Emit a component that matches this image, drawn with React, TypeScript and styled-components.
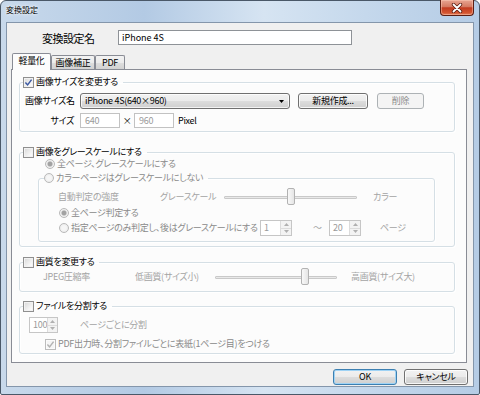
import React from 'react';
import styled, { createGlobalStyle } from 'styled-components';

const GlobalStyle = createGlobalStyle`
  html, body { margin: 0; padding: 0; background: #fff; }
  body {
    font-family: "Noto Sans CJK JP", "Noto Sans", sans-serif;
    font-size: 9px;
    letter-spacing: -0.3px;
    font-feature-settings: "palt";
    line-height: 12px;
    color: #000;
  }
  * { box-sizing: border-box; }
`;

type Tone = 'on' | 'off' | 'faint';
const toneColor: Record<Tone, string> = { on: '#000', off: '#8a8a8a', faint: '#a4a4a4' };

const Window = styled.div`
  width: 480px;
  height: 395px;
  display: flex;
  flex-direction: column;
  padding: 0 5px 7px;
  border: 1px solid #4a5868;
  border-radius: 6px 6px 2px 2px;
  background: linear-gradient(to right, #c8d9eb 0%, #b3cae4 30%, #d6e4f2 55%, #c2d6eb 80%, #b5cce5 100%);
`;

const TitleBar = styled.div`
  height: 21px;
  flex: none;
  display: flex;
  justify-content: space-between;
  align-items: flex-start;
`;

const TitleText = styled.span`
  margin-top: 4px;
  font-size: 8px;
  letter-spacing: 0;
  line-height: 10px;
  text-shadow: 0 0 4px #fff, 0 0 2px #fff;
`;

const CloseButton = styled.div`
  width: 34px;
  height: 16px;
  margin-top: -1px;
  border: 1px solid #5b1e13;
  border-top: none;
  border-radius: 0 0 4px 4px;
  background: linear-gradient(#e8a592 0%, #d57a62 45%, #c23b20 52%, #d35530 85%, #e3805d 100%);
  box-shadow: inset 0 0 0 1px rgba(255, 210, 190, 0.45);
  display: flex;
  align-items: center;
  justify-content: center;
`;

const Client = styled.div`
  flex: 1;
  display: flex;
  flex-direction: column;
  background: #f0f0f0;
  border: 1px solid #8496ab;
`;

const NameRow = styled.div`
  flex: none;
  display: flex;
  align-items: center;
  height: 15px;
  margin-top: 7px;
  padding-left: 35px;
`;

const NameLabel = styled.span`
  width: 76px;
  font-size: 11px;
  letter-spacing: -0.5px;
`;

const NameInput = styled.input`
  width: 234px;
  height: 15px;
  padding: 0 3px;
  border: 1px solid #8e9297;
  background: #fff;
  font: inherit;
  letter-spacing: 0;
  color: #000;
  outline: none;
`;

const TabStrip = styled.div`
  flex: none;
  display: flex;
  align-items: flex-end;
  height: 16px;
  margin: 8px 0 0 5px;
`;

const Tab = styled.div<{ $active?: boolean; $w: number }>`
  position: relative;
  z-index: ${p => (p.$active ? 1 : 0)};
  width: ${p => p.$w}px;
  height: ${p => (p.$active ? 17 : 14)}px;
  margin-bottom: ${p => (p.$active ? -1 : 0)}px;
  border: 1px solid #898c95;
  border-bottom: none;
  border-radius: 2px 2px 0 0;
  background: ${p => (p.$active ? '#fcfcfc' : 'linear-gradient(#f3f3f3, #ebebeb 50%, #dedede 50%, #d2d2d2)')};
  display: flex;
  align-items: center;
  justify-content: center;
  padding-bottom: ${p => (p.$active ? 2 : 0)}px;
`;

const Panel = styled.div`
  flex: 1;
  margin: 0 6px 0 4px;
  border: 1px solid #898c95;
  background: #fcfcfc;
  display: flex;
  flex-direction: column;
`;

const Group = styled.fieldset<{ $top: number; $inner?: boolean }>`
  margin: ${p => (p.$inner ? `${p.$top}px 14px 0 13px` : `${p.$top}px 11px 0 7px`)};
  padding: 0 5px;
  padding-left: ${p => (p.$inner ? 7 : 5)}px;
  min-width: 0;
  border: 1px solid #d5dfe5;
  border-radius: 3px;
  box-shadow: inset 1px 1px 0 #fff, 1px 1px 0 #fff;
`;

const Legend = styled.legend`
  padding: 0 5px 0 0;
  margin-left: -2px;
  height: 12px;
`;

const GroupBody = styled.div<{ $pt: number; $pb: number }>`
  display: flex;
  flex-direction: column;
  padding: ${p => p.$pt}px 0 ${p => p.$pb}px;
`;

const Row = styled.div<{ $h: number; $mt?: number; $pl?: number }>`
  display: flex;
  align-items: center;
  height: ${p => p.$h}px;
  margin-top: ${p => p.$mt ?? 0}px;
  padding-left: ${p => p.$pl ?? 0}px;
`;

const Text = styled.span<{ $tone?: Tone; $w?: number; $ml?: number }>`
  flex: none;
  white-space: nowrap;
  color: ${p => toneColor[p.$tone ?? 'on']};
  ${p => (p.$w ? `width: ${p.$w}px;` : '')}
  margin-left: ${p => p.$ml ?? 0}px;
`;

const FieldLabel = styled.span<{ $right?: boolean }>`
  width: 55px;
  flex: none;
  white-space: nowrap;
  text-align: ${p => (p.$right ? 'right' : 'left')};
  padding-right: ${p => (p.$right ? 6 : 0)}px;
`;

const Select = styled.div`
  width: 210px;
  height: 16px;
  flex: none;
  padding: 0 5px 0 4px;
  border: 1px solid #707070;
  border-radius: 3px;
  background: linear-gradient(#f2f2f2, #ebebeb 50%, #dddddd 50%, #cfcfcf);
  box-shadow: inset 0 0 0 1px rgba(255, 255, 255, 0.75);
  display: flex;
  align-items: center;
  justify-content: space-between;
`;

const Button = styled.button<{ $w: number; $ml?: number; $default?: boolean }>`
  width: ${p => p.$w}px;
  height: 16px;
  margin-left: ${p => p.$ml ?? 0}px;
  padding: 0;
  flex: none;
  font: inherit;
  letter-spacing: inherit;
  color: #000;
  border: 1px solid ${p => (p.$default ? '#3c7fb1' : '#707070')};
  border-radius: 3px;
  background: linear-gradient(#f2f2f2, #ebebeb 50%, #dddddd 50%, #cfcfcf);
  box-shadow: inset 0 0 0 1px ${p => (p.$default ? '#9fd3f5' : 'rgba(255, 255, 255, 0.8)')};
  &:disabled {
    color: #8d8d8d;
    border-color: #adb2b5;
    background: #f4f4f4;
    box-shadow: none;
  }
`;

const TextBox = styled.div<{ $w: number }>`
  width: ${p => p.$w}px;
  height: 15px;
  flex: none;
  padding-left: 4px;
  border: 1px solid #c2c2c2;
  background: #fff;
  color: #9a9a9a;
  line-height: 13px;
`;

const Times = styled.span`
  width: 14px;
  flex: none;
  text-align: center;
`;

const Spin = styled.div<{ $w: number }>`
  width: ${p => p.$w}px;
  height: 16px;
  flex: none;
  display: flex;
  border: 1px solid #c6c6c6;
  background: #fff;
`;

const SpinValue = styled.span`
  flex: 1;
  padding-left: 3px;
  line-height: 14px;
  color: #9a9a9a;
`;

const SpinButtons = styled.div`
  width: 11px;
  display: flex;
  flex-direction: column;
  border-left: 1px solid #dcdcdc;
`;

const SpinArrow = styled.span`
  flex: 1;
  display: flex;
  align-items: center;
  justify-content: center;
  background: #f3f3f3;
  & + & { border-top: 1px solid #dcdcdc; }
`;

const Choice = styled.label<{ $tone?: Tone; $w?: number }>`
  display: inline-flex;
  align-items: center;
  gap: 2px;
  height: 12px;
  flex: none;
  white-space: nowrap;
  color: ${p => toneColor[p.$tone ?? 'on']};
  ${p => (p.$w ? `width: ${p.$w}px;` : '')}
`;

const CheckBox = styled.span<{ $disabled?: boolean }>`
  width: 11px;
  height: 11px;
  flex: none;
  display: inline-flex;
  align-items: center;
  justify-content: center;
  border: 1px solid ${p => (p.$disabled ? '#bcbcbc' : '#8f8f8f')};
  background: ${p => (p.$disabled ? '#f5f5f5' : 'linear-gradient(135deg, #d6d6d6 0%, #f4f4f4 65%, #fff 100%)')};
  box-shadow: inset 0 0 0 1px ${p => (p.$disabled ? '#fbfbfb' : '#f2f2f2')};
`;

const RadioDot = styled.span<{ $on?: boolean }>`
  width: 10px;
  height: 10px;
  flex: none;
  border-radius: 50%;
  border: 1px solid #b9b9b9;
  background: ${p =>
    p.$on
      ? 'radial-gradient(circle, #a2a2a2 0 2px, #cfcfcf 2.6px, #f3f3f3 3.2px, #e4e4e4 100%)'
      : 'radial-gradient(circle, #f6f6f6 0 2px, #e6e6e6 100%)'};
`;

const Slider = styled.div<{ $w: number }>`
  position: relative;
  width: ${p => p.$w}px;
  height: 18px;
  flex: none;
  display: flex;
  align-items: center;
`;

const Track = styled.div`
  width: 100%;
  height: 3px;
  border: 1px solid #c9c9c9;
  border-radius: 1px;
  background: #e9e9e9;
`;

const Thumb = styled.span`
  position: absolute;
  top: 0;
  width: 8px;
  height: 17px;
  margin-left: -4px;
  border: 1px solid #b2b2b2;
  border-radius: 2px;
  background: linear-gradient(to right, #f8f8f8, #e5e5e5);
`;

const Footer = styled.div`
  flex: none;
  height: 23px;
  display: flex;
  justify-content: flex-end;
  gap: 7px;
  padding: 6px 5px 0 0;
`;

const Check: React.FC<{ checked?: boolean; disabled?: boolean; label: string; tone?: Tone }> = p => (
  <Choice $tone={p.tone}>
    <CheckBox $disabled={p.disabled}>
      {p.checked && (
        <svg width="9" height="9" viewBox="0 0 9 9">
          <path
            d="M1.4 4.4 L3.6 6.9 L7.6 1.6"
            fill="none"
            stroke={p.disabled ? '#b3b3b3' : '#3d5aa3'}
            strokeWidth="1.5"
          />
        </svg>
      )}
    </CheckBox>
    {p.label}
  </Choice>
);

const Radio: React.FC<{ on?: boolean; label: string; w?: number }> = p => (
  <Choice $tone="off" $w={p.w}>
    <RadioDot $on={p.on} />
    {p.label}
  </Choice>
);

const Spinner: React.FC<{ value: string; w: number }> = p => (
  <Spin $w={p.w}>
    <SpinValue>{p.value}</SpinValue>
    <SpinButtons>
      <SpinArrow>
        <svg width="5" height="3" viewBox="0 0 5 3"><path d="M0 3 L2.5 0 L5 3Z" fill="#b0b0b0" /></svg>
      </SpinArrow>
      <SpinArrow>
        <svg width="5" height="3" viewBox="0 0 5 3"><path d="M0 0 L2.5 3 L5 0Z" fill="#b0b0b0" /></svg>
      </SpinArrow>
    </SpinButtons>
  </Spin>
);

const Range: React.FC<{ w: number; value: number }> = p => (
  <Slider $w={p.w}>
    <Track />
    <Thumb style={{ left: `${p.value}%` }} />
  </Slider>
);

export default function App() {
  return (
    <>
      <GlobalStyle />
      <Window>
        <TitleBar>
          <TitleText>変換設定</TitleText>
          <CloseButton>
            <svg width="12" height="10" viewBox="0 0 12 10">
              <path d="M2.5 1.5 L9.5 8.5 M9.5 1.5 L2.5 8.5" stroke="#5a1d12" strokeWidth="3.4" strokeLinecap="round" />
              <path d="M2.5 1.5 L9.5 8.5 M9.5 1.5 L2.5 8.5" stroke="#fff" strokeWidth="1.8" strokeLinecap="round" />
            </svg>
          </CloseButton>
        </TitleBar>
        <Client>
          <NameRow>
            <NameLabel>変換設定名</NameLabel>
            <NameInput readOnly value="iPhone 4S" />
          </NameRow>
          <TabStrip>
            <Tab $active $w={39}>軽量化</Tab>
            <Tab $w={44}>画像補正</Tab>
            <Tab $w={30}>PDF</Tab>
          </TabStrip>
          <Panel>
            <Group $top={6}>
              <Legend>
                <Check checked label="画像サイズを変更する" />
              </Legend>
              <GroupBody $pt={5} $pb={3}>
                <Row $h={16}>
                  <FieldLabel>画像サイズ名</FieldLabel>
                  <Select>
                    <span>iPhone 4S(640×960)</span>
                    <svg width="5" height="3" viewBox="0 0 5 3"><path d="M0 0 L5 0 L2.5 3Z" fill="#000" /></svg>
                  </Select>
                  <Button $w={70} $ml={8}>新規作成...</Button>
                  <Button $w={47} $ml={9} disabled>削除</Button>
                </Row>
                <Row $h={15} $mt={4}>
                  <FieldLabel $right>サイズ</FieldLabel>
                  <TextBox $w={40}>640</TextBox>
                  <Times>×</Times>
                  <TextBox $w={40}>960</TextBox>
                  <Text $ml={4}>Pixel</Text>
                </Row>
              </GroupBody>
            </Group>

            <Group $top={14}>
              <Legend>
                <Check label="画像をグレースケールにする" />
              </Legend>
              <GroupBody $pt={0} $pb={4}>
                <Row $h={12} $pl={20}>
                  <Radio on label="全ページ、グレースケールにする" />
                </Row>
                <Group $top={2} $inner>
                  <Legend>
                    <Radio label="カラーページはグレースケールにしない" />
                  </Legend>
                  <GroupBody $pt={4} $pb={5}>
                    <Row $h={18} $pl={12}>
                      <Text $tone="faint" $w={102}>自動判定の強度</Text>
                      <Text $tone="faint" $w={64}>グレースケール</Text>
                      <Range w={133} value={50} />
                      <Text $tone="faint" $ml={16}>カラー</Text>
                    </Row>
                    <Row $h={12} $mt={1} $pl={13}>
                      <Radio on label="全ページ判定する" />
                    </Row>
                    <Row $h={16} $mt={1} $pl={13}>
                      <Radio w={201} label="指定ページのみ判定し、後はグレースケールにする" />
                      <Spinner w={32} value="1" />
                      <Text $tone="faint" $w={16} $ml={21}>〜</Text>
                      <Spinner w={32} value="20" />
                      <Text $tone="faint" $ml={19}>ページ</Text>
                    </Row>
                  </GroupBody>
                </Group>
              </GroupBody>
            </Group>

            <Group $top={9}>
              <Legend>
                <Check label="画質を変更する" />
              </Legend>
              <GroupBody $pt={0} $pb={5}>
                <Row $h={18} $pl={18}>
                  <Text $tone="faint" $w={92}>JPEG圧縮率</Text>
                  <Text $tone="faint" $w={80}>低画質(サイズ小)</Text>
                  <Range w={122} value={74} />
                  <Text $tone="faint" $ml={14}>高画質(サイズ大)</Text>
                </Row>
              </GroupBody>
            </Group>

            <Group $top={8}>
              <Legend>
                <Check label="ファイルを分割する" />
              </Legend>
              <GroupBody $pt={5} $pb={3}>
                <Row $h={16} $pl={4}>
                  <Spinner w={29} value="100" />
                  <Text $tone="faint" $ml={22}>ページごとに分割</Text>
                </Row>
                <Row $h={12} $mt={5} $pl={20}>
                  <Check checked disabled tone="off" label="PDF出力時、分割ファイルごとに表紙(1ページ目)をつける" />
                </Row>
              </GroupBody>
            </Group>
          </Panel>
          <Footer>
            <Button $w={64} $default>OK</Button>
            <Button $w={64}>キャンセル</Button>
          </Footer>
        </Client>
      </Window>
    </>
  );
}
